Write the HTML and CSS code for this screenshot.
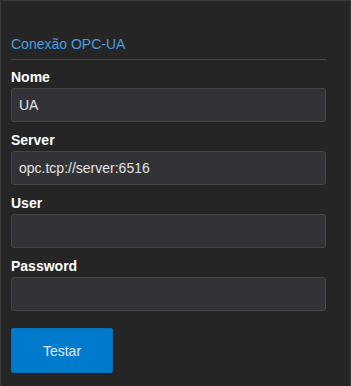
FILE: index.html
```html
<!DOCTYPE html>
<html lang="pt">
<head>
<meta charset="utf-8">
<title>Conexão OPC-UA</title>
<link rel="stylesheet" href="styles.css">
</head>
<body>
<div class="panel">
  <div class="title">Conexão OPC-UA</div>
  <div class="field">
    <label class="label">Nome</label>
    <div class="input">UA</div>
  </div>
  <div class="field">
    <label class="label">Server</label>
    <div class="input">opc.tcp://server:6516</div>
  </div>
  <div class="field">
    <label class="label">User</label>
    <div class="input"></div>
  </div>
  <div class="field">
    <label class="label">Password</label>
    <div class="input"></div>
  </div>
  <button class="btn">Testar</button>
</div>
</body>
</html>
```
FILE: styles.css
```css
html, body {
  margin: 0;
  padding: 0;
  background: #252526;
}
.panel {
  box-sizing: border-box;
  width: 351px;
  height: 386px;
  border: 1px solid #3a3a3a;
  border-bottom: none;
  background: #252526;
  padding: 35px 24px 0 10px;
  font-family: "Liberation Sans", Arial, sans-serif;
  font-size: 14px;
  line-height: 17px;
  display: flex;
  flex-direction: column;
}
.title {
  color: #4a9de0;
  padding-bottom: 6px;
  border-bottom: 1px solid #484848;
  margin-bottom: 9px;
}
.field {
  display: flex;
  flex-direction: column;
  margin-bottom: 10px;
}
.label {
  color: #ffffff;
  font-weight: bold;
  margin-bottom: 2px;
}
.input {
  box-sizing: border-box;
  height: 34px;
  background: #333337;
  border: 1px solid #464646;
  border-radius: 3px;
  color: #e4e4e4;
  padding: 0 7px;
  display: flex;
  align-items: center;
}
.btn {
  margin-top: 7px;
  align-self: flex-start;
  width: 102px;
  height: 45px;
  background: #007acc;
  border: 1px solid #0a6fb8;
  border-radius: 2px;
  color: #e0eaf4;
  font-family: "Liberation Sans", Arial, sans-serif;
  font-size: 14px;
  padding: 0;
}
```
